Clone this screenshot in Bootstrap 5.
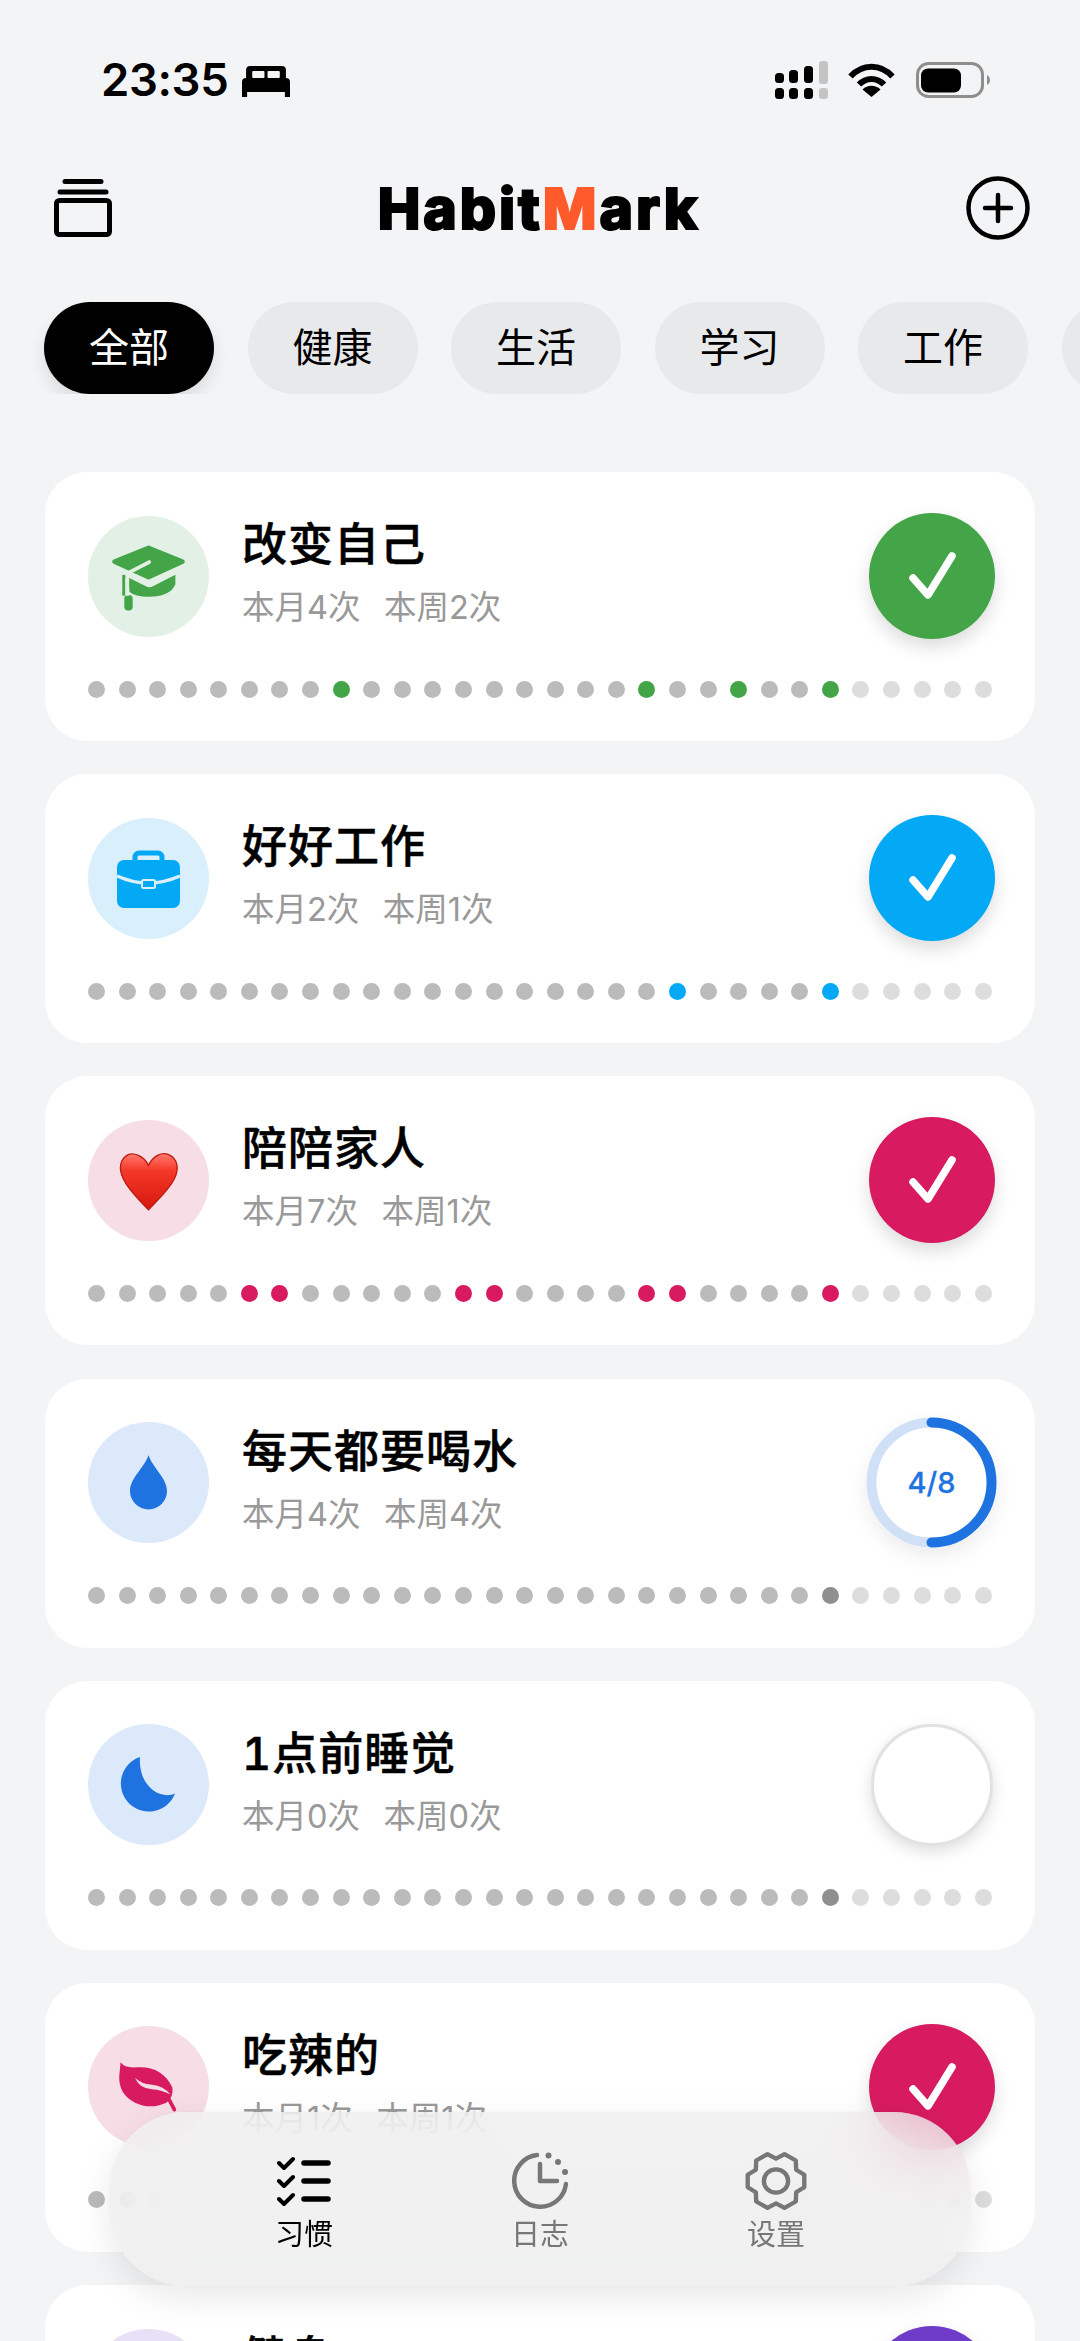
<!DOCTYPE html>
<html lang="zh">
<head>
<meta charset="utf-8">
<title>HabitMark</title>
<link href="https://cdn.jsdelivr.net/npm/bootstrap@5.3.0/dist/css/bootstrap.min.css" rel="stylesheet">
<style>
html,body{margin:0;width:1080px;height:2341px;overflow:hidden;background:#f3f4f6;}
body{font-family:Inter,"Noto Sans CJK SC",sans-serif;position:relative;color:#000;}
.sbar{height:140px;padding:60px 90px 0 101px;}
.sbar-inner{height:40px;}
.clock-txt{font-size:45.500px;font-weight:600;line-height:40px;letter-spacing:-.4px;}
.bed-ic{margin-left:14px;margin-top:2px;}
.sig-ic{margin-right:20px;}
.wifi-ic{margin-right:21px;}
.topbar{height:136px;padding:0 50px 0 54px;}
.logo-txt{font-family:Inter,"Noto Sans",sans-serif;font-weight:800;font-size:57px;line-height:1;letter-spacing:2.900px;-webkit-text-stroke:2px currentColor;}
.logo-m{color:#ff5a2c;}
.pill-row{margin-top:26px;margin-bottom:78px;padding-left:44px;gap:33.500px;width:1080px;overflow:hidden;}
.pill-btn{flex:0 0 170px;height:92px;border:0;border-radius:46px;background:#e8e9eb;color:#000;font-size:40px;line-height:92px;padding:0;text-align:center;}
.pill-btn.sel{background:#000;color:#fff;box-shadow:0 8px 16px rgba(0,0,0,.1);}
.habit-list{padding:0 45px;gap:33.200px;}
.habit-card{height:269px;border:0;border-radius:42px;background:#fff;padding:41px 43px 0;flex:0 0 269px;}
.habit-top{height:126px;margin-bottom:41.500px;}
.habit-ic{width:121px;height:121px;background:var(--hb);flex:0 0 121px;margin-right:33px;}
.habit-ic svg{display:block;}
.habit-txt{padding-bottom:5px;}
.habit-name{font-size:45px;font-weight:500;line-height:52px;margin-bottom:17px;letter-spacing:1px;font-feature-settings:"tnum";-webkit-text-stroke:.5px currentColor;}
.habit-sub{font-size:32.500px;line-height:40px;min-height:40px;color:#999;gap:23.500px;}
.chk{width:126px;height:126px;background:var(--hc);box-shadow:0 8px 18px rgba(0,0,0,.14);margin-right:-2.500px;}
.chk-empty{width:122px;height:122px;background:#fff;border:3px solid #e2e2e2;box-shadow:0 6px 16px rgba(0,0,0,.13);margin-right:-1px;}
.ring-box{width:131px;height:131px;margin-right:-5px;border-radius:50%;box-shadow:0 8px 20px rgba(0,0,0,.08);}
.ring-txt{font-size:29px;font-weight:500;color:#1e73e0;line-height:1;-webkit-text-stroke:.3px currentColor;}
.dot-row{justify-content:space-between;}
.pt{display:block;width:17px;height:17px;border-radius:50%;background:#bbb;}
.pt.on{background:var(--hc);}
.pt.fu{background:#ddd;}
.pt.td{background:#8f8f8f;}
.th-green{--hc:#43a547;--hb:#e3f0e5;}
.th-sky{--hc:#03a9f4;--hb:#d9effc;}
.th-rose{--hc:#d81b60;--hb:#f7dde6;}
.th-water{--hc:#1e73e0;--hb:#dce9fb;}
.th-violet{--hc:#6f3bc9;--hb:#e8e0f6;}
.tabbar{left:110px;top:2112px;width:860px;height:174px;border-radius:76px;background:rgba(238,238,238,.76);-webkit-backdrop-filter:blur(32px);backdrop-filter:blur(32px);box-shadow:0 12px 36px rgba(0,0,0,.09),0 0 0 1px rgba(0,0,0,.02);padding-top:40px;}
.tab-item{width:236px;color:#777;}
.tab-item.sel{color:#000;}
.tab-ic{height:60px;}
.tab-lbl{font-size:29px;line-height:36px;margin-top:5px;}
</style>
</head>
<body>
<div class="sbar">
  <div class="sbar-inner d-flex align-items-center justify-content-between">
    <div class="d-flex align-items-center">
      <span class="clock-txt">23:35</span>
      <svg class="bed-ic" width="48" height="31" viewBox="0 0 47 31" preserveAspectRatio="none"><path fill="#000" d="M8 0H39a4 4 0 0 1 4 4V12H4V4a4 4 0 0 1 4-4Z"/><rect x="10" y="5" width="12" height="7" rx="1" fill="#f3f4f6"/><rect x="25" y="5" width="12" height="7" rx="1" fill="#f3f4f6"/><path fill="#000" d="M4 12H43a4 4 0 0 1 4 4V31H42V26H5V31H0V16a4 4 0 0 1 4-4Z"/></svg>
    </div>
    <div class="d-flex align-items-center">
      <svg class="sig-ic" width="53" height="38" viewBox="0 0 53 38"><g fill="#000"><rect x="0" y="12" width="9" height="10" rx="3.500"/><rect x="14" y="9" width="9" height="13" rx="3.500"/><rect x="29" y="5" width="9" height="17" rx="3.500"/><rect x="0" y="27" width="9" height="11" rx="3.500"/><rect x="14" y="27" width="9" height="11" rx="3.500"/><rect x="29" y="27" width="9" height="11" rx="3.500"/></g><g fill="#c4c4c4"><rect x="44" y="0" width="9" height="23" rx="3"/><rect x="44" y="27" width="9" height="11" rx="3"/></g></svg>
      <svg class="wifi-ic" width="47" height="34" viewBox="0 0 47 34"><g fill="none" stroke="#000" stroke-width="6"><path d="M2.500 13.500C14.500 .5 32.500 .5 44.500 13.500"/><path d="M11 21.500C18 14 29 14 36 21.500"/></g><path fill="#000" d="M14.500 26.500C19.500 21.500 27.500 21.500 32.500 26.500L23.500 34Z"/></svg>
      <svg width="74" height="36" viewBox="0 0 74 36"><rect x="1.500" y="1.500" width="65" height="33" rx="11" fill="none" stroke="#8e8e8e" stroke-width="3"/><rect x="5" y="6.500" width="40" height="24" rx="7" fill="#000"/><path d="M71 13c2 1 3 3 3 5s-1 4-3 5Z" fill="#8e8e8e"/></svg>
    </div>
  </div>
</div>

<div class="topbar d-flex align-items-center justify-content-between">
  <svg width="58" height="58" viewBox="0 0 58 58"><g fill="none" stroke="#000" stroke-width="5" stroke-linecap="round" stroke-linejoin="round"><path d="M11 2.500H47"/><path d="M6 13H52"/><rect x="2.500" y="21.500" width="53" height="34" rx="3"/></g></svg>
  <div class="logo-txt">Habit<span class="logo-m">M</span>ark</div>
  <svg width="64" height="64" viewBox="0 0 64 64"><circle cx="32" cy="32" r="29.500" fill="none" stroke="#000" stroke-width="4.500"/><path d="M19 32H45M32 19V45" stroke="#000" stroke-width="4.500" stroke-linecap="round"/></svg>
</div>

<div class="pill-row d-flex">
  <button class="btn pill-btn sel">全部</button>
  <button class="btn pill-btn">健康</button>
  <button class="btn pill-btn">生活</button>
  <button class="btn pill-btn">学习</button>
  <button class="btn pill-btn">工作</button>
  <button class="btn pill-btn" aria-label="更多"></button>
</div>

<div class="habit-list d-flex flex-column">

  <div class="card habit-card th-green">
    <div class="habit-top d-flex align-items-center">
      <div class="habit-ic rounded-circle">
        <svg width="121" height="121" viewBox="55 47 360 360"><g fill="#43a547"><path stroke="#43a547" stroke-width="14" stroke-linejoin="round" d="M235 142L336 183L235 229L134 183Z"/><path d="M158 222L232 258Q238 260 244 258L315 222V250Q300 287 235 287Q195 287 178 272L176 240Z"/><rect x="157" y="222" width="9" height="62"/><rect x="163" y="282" width="25" height="46" rx="11"/></g><path fill="none" stroke="#e3f0e5" stroke-width="11" stroke-linecap="round" d="M237 184L172 218"/><path fill="none" stroke="#e3f0e5" stroke-width="11" d="M172 218L235 248L318 206M172 218V284"/></svg>
      </div>
      <div class="habit-txt flex-grow-1">
        <div class="habit-name">改变自己</div>
        <div class="habit-sub d-flex"><span>本月4次</span><span>本周2次</span></div>
      </div>
      <div class="chk rounded-circle d-flex align-items-center justify-content-center">
        <svg width="126" height="126" viewBox="0 0 126 126"><path d="M44 65L59 82L83 43" fill="none" stroke="#fff" stroke-width="7.500" stroke-linecap="round" stroke-linejoin="round"/></svg>
      </div>
    </div>
    <div class="dot-row d-flex"><i class="pt"></i><i class="pt"></i><i class="pt"></i><i class="pt"></i><i class="pt"></i><i class="pt"></i><i class="pt"></i><i class="pt"></i><i class="pt on"></i><i class="pt"></i><i class="pt"></i><i class="pt"></i><i class="pt"></i><i class="pt"></i><i class="pt"></i><i class="pt"></i><i class="pt"></i><i class="pt"></i><i class="pt on"></i><i class="pt"></i><i class="pt"></i><i class="pt on"></i><i class="pt"></i><i class="pt"></i><i class="pt on"></i><i class="pt fu"></i><i class="pt fu"></i><i class="pt fu"></i><i class="pt fu"></i><i class="pt fu"></i></div>
  </div>

  <div class="card habit-card th-sky">
    <div class="habit-top d-flex align-items-center">
      <div class="habit-ic rounded-circle">
        <svg width="121" height="121" viewBox="0 0 121 121"><path fill="none" stroke="#03a9f4" stroke-width="5" d="M47 45V39a4 4 0 0 1 4-4H70a4 4 0 0 1 4 4V45"/><rect x="29" y="42" width="63" height="48" rx="7" fill="#03a9f4"/><path d="M29 58Q60 72 92 58" fill="none" stroke="#d9effc" stroke-width="3.500"/><rect x="54" y="62" width="13" height="8" rx="1.500" fill="#03a9f4" stroke="#d9effc" stroke-width="2"/></svg>
      </div>
      <div class="habit-txt flex-grow-1">
        <div class="habit-name">好好工作</div>
        <div class="habit-sub d-flex"><span>本月2次</span><span>本周1次</span></div>
      </div>
      <div class="chk rounded-circle d-flex align-items-center justify-content-center">
        <svg width="126" height="126" viewBox="0 0 126 126"><path d="M44 65L59 82L83 43" fill="none" stroke="#fff" stroke-width="7.500" stroke-linecap="round" stroke-linejoin="round"/></svg>
      </div>
    </div>
    <div class="dot-row d-flex"><i class="pt"></i><i class="pt"></i><i class="pt"></i><i class="pt"></i><i class="pt"></i><i class="pt"></i><i class="pt"></i><i class="pt"></i><i class="pt"></i><i class="pt"></i><i class="pt"></i><i class="pt"></i><i class="pt"></i><i class="pt"></i><i class="pt"></i><i class="pt"></i><i class="pt"></i><i class="pt"></i><i class="pt"></i><i class="pt on"></i><i class="pt"></i><i class="pt"></i><i class="pt"></i><i class="pt"></i><i class="pt on"></i><i class="pt fu"></i><i class="pt fu"></i><i class="pt fu"></i><i class="pt fu"></i><i class="pt fu"></i></div>
  </div>

  <div class="card habit-card th-rose">
    <div class="habit-top d-flex align-items-center">
      <div class="habit-ic rounded-circle">
        <svg width="121" height="121" viewBox="25 30 360 360"><defs><linearGradient id="hg" x1="0" y1="0" x2="0" y2="1"><stop offset="0" stop-color="#ff7a6c"/><stop offset=".3" stop-color="#f4382a"/><stop offset="1" stop-color="#d8170c"/></linearGradient></defs><path fill="url(#hg)" stroke="#bd1c10" stroke-width="4" d="M205 165C190 135 160 127 145 133C120 145 115 175 130 205C145 240 185 275 205 297C225 275 265 240 282 205C297 175 292 145 265 133C245 125 220 135 205 165Z"/></svg>
      </div>
      <div class="habit-txt flex-grow-1">
        <div class="habit-name">陪陪家人</div>
        <div class="habit-sub d-flex"><span>本月7次</span><span>本周1次</span></div>
      </div>
      <div class="chk rounded-circle d-flex align-items-center justify-content-center">
        <svg width="126" height="126" viewBox="0 0 126 126"><path d="M44 65L59 82L83 43" fill="none" stroke="#fff" stroke-width="7.500" stroke-linecap="round" stroke-linejoin="round"/></svg>
      </div>
    </div>
    <div class="dot-row d-flex"><i class="pt"></i><i class="pt"></i><i class="pt"></i><i class="pt"></i><i class="pt"></i><i class="pt on"></i><i class="pt on"></i><i class="pt"></i><i class="pt"></i><i class="pt"></i><i class="pt"></i><i class="pt"></i><i class="pt on"></i><i class="pt on"></i><i class="pt"></i><i class="pt"></i><i class="pt"></i><i class="pt"></i><i class="pt on"></i><i class="pt on"></i><i class="pt"></i><i class="pt"></i><i class="pt"></i><i class="pt"></i><i class="pt on"></i><i class="pt fu"></i><i class="pt fu"></i><i class="pt fu"></i><i class="pt fu"></i><i class="pt fu"></i></div>
  </div>

  <div class="card habit-card th-water">
    <div class="habit-top d-flex align-items-center">
      <div class="habit-ic rounded-circle">
        <svg width="121" height="121" viewBox="0 0 121 121"><path fill="#1e73e0" d="M60.500 33C64 45 79 56 79 69A18.500 18.500 0 0 1 42 69C42 56 57 45 60.500 33Z"/></svg>
      </div>
      <div class="habit-txt flex-grow-1">
        <div class="habit-name">每天都要喝水</div>
        <div class="habit-sub d-flex"><span>本月4次</span><span>本周4次</span></div>
      </div>
      <div class="ring-box position-relative d-flex align-items-center justify-content-center">
        <svg class="position-absolute top-0 start-0" width="131" height="131" viewBox="0 0 132 132"><circle cx="66" cy="66" r="60.500" fill="#fff" stroke="#cfe0f7" stroke-width="10"/><path d="M66 5.500A60.500 60.500 0 0 1 66 126.500" fill="none" stroke="#1e73e0" stroke-width="10" stroke-linecap="round"/></svg>
        <span class="ring-txt position-relative">4/8</span>
      </div>
    </div>
    <div class="dot-row d-flex"><i class="pt"></i><i class="pt"></i><i class="pt"></i><i class="pt"></i><i class="pt"></i><i class="pt"></i><i class="pt"></i><i class="pt"></i><i class="pt"></i><i class="pt"></i><i class="pt"></i><i class="pt"></i><i class="pt"></i><i class="pt"></i><i class="pt"></i><i class="pt"></i><i class="pt"></i><i class="pt"></i><i class="pt"></i><i class="pt"></i><i class="pt"></i><i class="pt"></i><i class="pt"></i><i class="pt"></i><i class="pt td"></i><i class="pt fu"></i><i class="pt fu"></i><i class="pt fu"></i><i class="pt fu"></i><i class="pt fu"></i></div>
  </div>

  <div class="card habit-card th-water">
    <div class="habit-top d-flex align-items-center">
      <div class="habit-ic rounded-circle">
        <svg width="121" height="121" viewBox="0 0 121 121"><path fill="#1e73e0" d="M52 33A28 28 0 1 0 87 69.600C72 76 50 62 52 33Z"/></svg>
      </div>
      <div class="habit-txt flex-grow-1">
        <div class="habit-name">1点前睡觉</div>
        <div class="habit-sub d-flex"><span>本月0次</span><span>本周0次</span></div>
      </div>
      <div class="chk chk-empty rounded-circle"></div>
    </div>
    <div class="dot-row d-flex"><i class="pt"></i><i class="pt"></i><i class="pt"></i><i class="pt"></i><i class="pt"></i><i class="pt"></i><i class="pt"></i><i class="pt"></i><i class="pt"></i><i class="pt"></i><i class="pt"></i><i class="pt"></i><i class="pt"></i><i class="pt"></i><i class="pt"></i><i class="pt"></i><i class="pt"></i><i class="pt"></i><i class="pt"></i><i class="pt"></i><i class="pt"></i><i class="pt"></i><i class="pt"></i><i class="pt"></i><i class="pt td"></i><i class="pt fu"></i><i class="pt fu"></i><i class="pt fu"></i><i class="pt fu"></i><i class="pt fu"></i></div>
  </div>

  <div class="card habit-card th-rose">
    <div class="habit-top d-flex align-items-center">
      <div class="habit-ic rounded-circle">
        <svg width="121" height="121" viewBox="25 22 360 360"><path fill="#d81b60" d="M122 130Q135 148 170 145Q245 140 276 205Q280 235 258 250Q210 272 165 250Q115 225 118 170Z"/><path fill="none" stroke="#d81b60" stroke-width="11" stroke-linecap="round" d="M258 225L282 271"/><path fill="#f7dde6" d="M165 176Q182 194 215 197Q250 200 270 226Q245 212 215 210Q176 207 165 176Z"/></svg>
      </div>
      <div class="habit-txt flex-grow-1">
        <div class="habit-name">吃辣的</div>
        <div class="habit-sub d-flex"><span>本月1次</span><span>本周1次</span></div>
      </div>
      <div class="chk rounded-circle d-flex align-items-center justify-content-center">
        <svg width="126" height="126" viewBox="0 0 126 126"><path d="M44 65L59 82L83 43" fill="none" stroke="#fff" stroke-width="7.500" stroke-linecap="round" stroke-linejoin="round"/></svg>
      </div>
    </div>
    <div class="dot-row d-flex"><i class="pt"></i><i class="pt"></i><i class="pt"></i><i class="pt"></i><i class="pt"></i><i class="pt"></i><i class="pt"></i><i class="pt"></i><i class="pt"></i><i class="pt"></i><i class="pt"></i><i class="pt"></i><i class="pt"></i><i class="pt"></i><i class="pt"></i><i class="pt"></i><i class="pt"></i><i class="pt"></i><i class="pt"></i><i class="pt"></i><i class="pt"></i><i class="pt"></i><i class="pt"></i><i class="pt"></i><i class="pt on"></i><i class="pt fu"></i><i class="pt fu"></i><i class="pt fu"></i><i class="pt fu"></i><i class="pt fu"></i></div>
  </div>

  <div class="card habit-card th-violet">
    <div class="habit-top d-flex align-items-center">
      <div class="habit-ic rounded-circle"></div>
      <div class="habit-txt flex-grow-1">
        <div class="habit-name">健身</div>
        <div class="habit-sub d-flex"></div>
      </div>
      <div class="chk rounded-circle"></div>
    </div>
  </div>
</div>

<nav class="tabbar position-absolute d-flex justify-content-center">
  <div class="tab-item sel d-flex flex-column align-items-center">
    <div class="tab-ic">
      <svg width="54" height="60" viewBox="0 0 54 60"><g fill="none" stroke="currentColor" stroke-linecap="round" stroke-linejoin="round"><g stroke-width="4"><path d="M2 11L7 16L16 7"/><path d="M2 29L7 34L16 25"/><path d="M2 47L7 52L16 43"/></g><g stroke-width="5.500"><path d="M27 11H51"/><path d="M27 29H51"/><path d="M27 47H51"/></g></g></svg>
    </div>
    <div class="tab-lbl">习惯</div>
  </div>
  <div class="tab-item d-flex flex-column align-items-center">
    <div class="tab-ic">
      <svg width="58" height="58" viewBox="0 0 58 58"><g fill="none" stroke="currentColor" stroke-width="4.500" stroke-linecap="round" stroke-linejoin="round"><path d="M26 3A26 26 0 1 0 55 32"/><path d="M29 12V29H46"/></g><g fill="currentColor"><circle cx="37.500" cy="3.500" r="3"/><circle cx="47" cy="10" r="3"/><circle cx="54" cy="20" r="3"/></g></svg>
    </div>
    <div class="tab-lbl">日志</div>
  </div>
  <div class="tab-item d-flex flex-column align-items-center">
    <div class="tab-ic">
      <svg width="62" height="58" viewBox="-32 -31 64 62" preserveAspectRatio="none"><path fill="none" stroke="currentColor" stroke-width="4.500" stroke-linejoin="round" d="M29.200 -6.750L29.200 6.750L20.800 12L20.460 21.940L8.770 28.690L0 24L-8.770 28.690L-20.460 21.940L-20.800 12L-29.200 6.750L-29.200 -6.750L-20.800 -12L-20.460 -21.940L-8.770 -28.690L0 -24L8.770 -28.690L20.460 -21.940L20.800 -12Z"/><circle r="12.500" fill="none" stroke="currentColor" stroke-width="4.500"/></svg>
    </div>
    <div class="tab-lbl">设置</div>
  </div>
</nav>
<script src="https://cdn.jsdelivr.net/npm/bootstrap@5.3.0/dist/js/bootstrap.bundle.min.js"></script>
</body>
</html>
